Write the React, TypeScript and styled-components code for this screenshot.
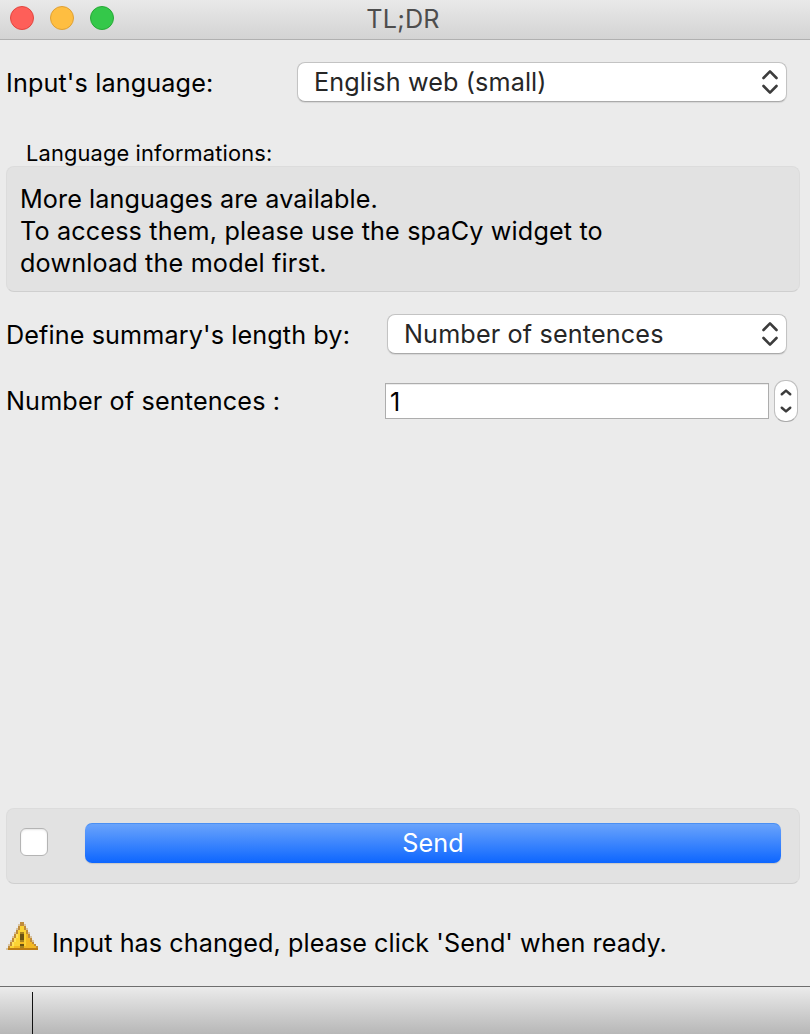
import React from "react";
import styled, { createGlobalStyle } from "styled-components";

const GlobalStyle = createGlobalStyle`
  *, *::before, *::after { box-sizing: border-box; }
  body {
    margin: 0;
    background: #ebebeb;
    font-family: Inter, "Liberation Sans", sans-serif;
    color: #000;
  }
`;

const Window = styled.div`
  display: flex;
  flex-direction: column;
  width: 810px;
  height: 1034px;
  overflow: hidden;
  background: #ebebeb;
`;

const TitleBar = styled.header`
  display: grid;
  grid-template-columns: 1fr auto 1fr;
  height: 40px;
  flex: none;
  padding: 0 14px 0 10px;
  background: linear-gradient(#e9e9e9, #d3d3d3);
  border-bottom: 1px solid #b0b0b0;
`;

const Lights = styled.div`
  display: flex;
  gap: 16px;
  padding-top: 6px;
`;

const Light = styled.span<{ $fill: string; $edge: string }>`
  width: 24px;
  height: 24px;
  border-radius: 50%;
  background: ${(p) => p.$fill};
  border: 1px solid ${(p) => p.$edge};
`;

const Text = styled.span<{ $spacing?: number; $size?: number; $color?: string; $line?: number }>`
  font-size: ${(p) => p.$size ?? 25.2}px;
  line-height: ${(p) => p.$line ?? 32}px;
  letter-spacing: ${(p) => p.$spacing ?? 0}px;
  color: ${(p) => p.$color ?? "#000"};
  white-space: nowrap;
`;

const Title = styled(Text)`
  padding-top: 3px;
`;

const Body = styled.main`
  display: flex;
  flex-direction: column;
  flex: 1;
  padding: 22px 10px 0 6px;
`;

const Row = styled.div<{ $top?: number; $right?: number }>`
  display: flex;
  align-items: center;
  justify-content: space-between;
  height: 40px;
  flex: none;
  margin-top: ${(p) => p.$top ?? 0}px;
  margin-right: ${(p) => p.$right ?? 0}px;
`;

const RowLabel = styled(Text)<{ $drop?: number }>`
  padding-top: ${(p) => p.$drop ?? 2}px;
`;

const Select = styled.button<{ $width: number }>`
  display: flex;
  align-items: center;
  justify-content: space-between;
  width: ${(p) => p.$width}px;
  height: 40px;
  padding: 0 7px 0 16px;
  font-family: inherit;
  background: #fff;
  border: 1px solid #c3c3c3;
  border-bottom-color: #aaa;
  border-radius: 8px;
  box-shadow: 0 1px 1px rgba(0, 0, 0, 0.09);
`;

const GroupTitle = styled(Text)`
  margin: 38px 0 0 20px;
`;

const Group = styled.section`
  flex: none;
  background: #e2e2e2;
  border: 1px solid #dcdcdc;
  border-bottom-color: #cfcfcf;
  border-radius: 8px;
`;

const InfoGroup = styled(Group)`
  display: flex;
  flex-direction: column;
  height: 126px;
  padding: 16px 13px;
`;

const SpinField = styled.div`
  display: flex;
  align-items: center;
  gap: 5px;
`;

const NumberBox = styled.div`
  display: flex;
  align-items: center;
  width: 384px;
  height: 36px;
  padding: 2px 0 0 4px;
  background: #fff;
  border: 1px solid #adadad;
  box-shadow: inset 0 1px 0 #ececec;
`;

const Stepper = styled.div`
  display: flex;
  align-items: center;
  justify-content: center;
  width: 24px;
  height: 42px;
  background: #fff;
  border: 1px solid #bfbfbf;
  border-bottom-color: #aaa;
  border-radius: 11px;
`;

const SendGroup = styled(Group)`
  display: flex;
  align-items: flex-start;
  justify-content: space-between;
  height: 76px;
  margin-top: auto;
  padding: 14px 18px 0 13px;
`;

const Checkbox = styled.span`
  width: 28px;
  height: 28px;
  margin-top: 5px;
  background: #fff;
  border: 1px solid #b4b4b4;
  border-radius: 6px;
  box-shadow: inset 0 1px 2px rgba(0, 0, 0, 0.1);
`;

const SendButton = styled.button`
  display: flex;
  align-items: center;
  justify-content: center;
  width: 696px;
  height: 40px;
  padding: 0;
  font-family: inherit;
  background: linear-gradient(#6ca5fb, #0d66ff) border-box;
  border: 1px solid transparent;
  border-top-color: #4a8ff3;
  border-radius: 7px;
  box-shadow: 0 1px 1px rgba(0, 0, 0, 0.12);
`;

const Status = styled.div`
  display: flex;
  align-items: flex-start;
  gap: 14px;
  height: 64px;
  flex: none;
  margin-top: 38px;
`;

const StatusText = styled(Text)`
  padding-top: 5px;
`;

const BottomBar = styled.footer`
  height: 48px;
  flex: none;
  padding: 5px 0 0 32px;
  background: linear-gradient(#ebebeb, #b7b7b7);
  border-top: 1px solid #6e6e6e;
`;

const BarDivider = styled.div`
  width: 1px;
  height: 42px;
  background: #111;
`;

const SelectArrows = () => (
  <svg width="18" height="26" viewBox="0 0 18 26" fill="none" stroke="#3c3c3c" strokeWidth="2.6" strokeLinecap="round" strokeLinejoin="round">
    <path d="M2.5 9 9 2.4 15.5 9M2.5 17 9 23.6 15.5 17" />
  </svg>
);

const StepArrows = () => (
  <svg width="12" height="26" viewBox="0 0 12 26" fill="none" stroke="#3c3c3c" strokeWidth="2.5" strokeLinecap="round" strokeLinejoin="round">
    <path d="M1.8 6.3 6 2.6 10.2 6.3M1.8 19.7 6 23.4 10.2 19.7" />
  </svg>
);

const warningPixels = [
  ".......bb.......",
  "......abba......",
  "......byyb......",
  ".....abyyba.....",
  ".....byyyyb.....",
  "....abyeeyba....",
  "....blyddygb....",
  "...ablyddygba...",
  "...blyyddyggb...",
  "..ablyyeeyggba..",
  "..blyyyggygggb..",
  ".ablyyyddyggggb.",
  ".byygggeeggggggb",
  "akkkkkkkkkkkkkkk",
];

const warningColors: Record<string, string> = {
  a: "#d9c4a0",
  b: "#c08c3a",
  y: "#fbd334",
  l: "#ffe35c",
  g: "#f3b822",
  e: "#a98420",
  d: "#6a5213",
  k: "#bd7d14",
};

const WarningIcon = () => (
  <svg width="32" height="28" viewBox="0 0 16 14" shapeRendering="crispEdges">
    {warningPixels.flatMap((row, y) =>
      row.split("").map((c, x) =>
        c === "." ? null : <rect key={`${x}-${y}`} x={x} y={y} width="1" height="1" fill={warningColors[c]} />
      )
    )}
  </svg>
);

export default function App() {
  return (
    <Window>
      <GlobalStyle />
      <TitleBar>
        <Lights>
          <Light $fill="#fe5f59" $edge="#e2463f" />
          <Light $fill="#febe41" $edge="#dfa035" />
          <Light $fill="#34c84a" $edge="#27a936" />
        </Lights>
        <Title $color="#4d4d4d" $spacing={0.2}>TL;DR</Title>
      </TitleBar>
      <Body>
        <Row $right={13 - 0}>
          <RowLabel $spacing={0.13}>Input's language:</RowLabel>
          <Select $width={490}>
            <Text $color="#262626" $spacing={0.12}>English web (small)</Text>
            <SelectArrows />
          </Select>
        </Row>
        <GroupTitle $size={21.8} $line={26} $spacing={0.16}>Language informations:</GroupTitle>
        <InfoGroup>
          <Text $spacing={0.08}>More languages are available.</Text>
          <Text $spacing={0.15}>To access them, please use the spaCy widget to</Text>
          <Text $spacing={0.16}>download the model first.</Text>
        </InfoGroup>
        <Row $top={22} $right={13}>
          <RowLabel $spacing={0.11}>Define summary's length by:</RowLabel>
          <Select $width={400}>
            <Text $color="#262626" $spacing={0.14}>Number of sentences</Text>
            <SelectArrows />
          </Select>
        </Row>
        <Row $top={27} $right={2}>
          <RowLabel $spacing={0.14} $drop={0}>Number of sentences :</RowLabel>
          <SpinField>
            <NumberBox>
              <Text>1</Text>
            </NumberBox>
            <Stepper>
              <StepArrows />
            </Stepper>
          </SpinField>
        </Row>
        <SendGroup>
          <Checkbox />
          <SendButton>
            <Text $color="#fff" $spacing={0.15}>Send</Text>
          </SendButton>
        </SendGroup>
        <Status>
          <WarningIcon />
          <StatusText $spacing={0.06}>Input has changed, please click 'Send' when ready.</StatusText>
        </Status>
      </Body>
      <BottomBar>
        <BarDivider />
      </BottomBar>
    </Window>
  );
}
